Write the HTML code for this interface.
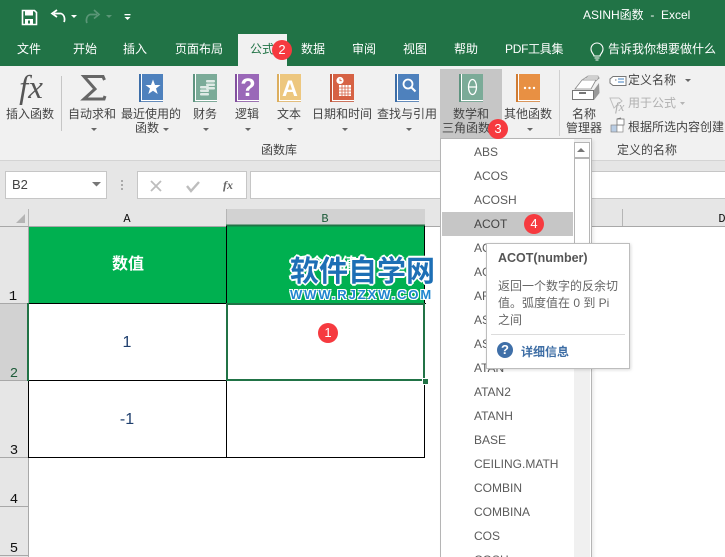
<!DOCTYPE html>
<html><head><meta charset="utf-8">
<style>
html,body{margin:0;padding:0;width:725px;height:557px;overflow:hidden;background:#fff}
#r{position:absolute;left:0;top:0;width:725px;height:557px;overflow:hidden;background:#fff;font-family:"Liberation Sans","Noto Sans CJK SC",sans-serif;font-size:12px;color:#444}
.a{position:absolute}
.t{position:absolute;white-space:nowrap;line-height:16px;height:16px}
.c{position:absolute;white-space:nowrap;line-height:16px;height:16px;transform:translateX(-50%);text-align:center}
.w{color:#fff}
.m{font-family:"Liberation Mono",monospace;color:#111}
.n{font-size:14px}
.fn{position:absolute;left:474px;line-height:16px;color:#5a5a5a;white-space:nowrap}
.b{position:absolute;width:20px;height:20px;border-radius:50%;background:#f63a3f;color:#fff;text-align:center;line-height:20px;font-size:13px}
svg{position:absolute;left:0;top:0}
</style></head><body><div id="r">
<div class="a" style="left:0;top:0;width:725px;height:66px;background:#217346"></div>
<div class="a" style="left:238px;top:34px;width:49px;height:32px;background:#f1f1f1"></div>
<div class="a" style="left:0;top:66px;width:725px;height:94px;background:#f1f1f1"></div>
<div class="a" style="left:0;top:160px;width:725px;height:49px;background:#e6e6e6;border-top:1px solid #d4d4d4;box-sizing:border-box"></div>
<div class="a" style="left:440px;top:69px;width:62px;height:69px;background:#c6c6c6"></div>
<div class="a" style="left:61px;top:76px;width:1px;height:55px;background:#c6c6c6"></div>
<div class="a" style="left:559px;top:70px;width:1px;height:66px;background:#d0d0d0"></div>

<div class="a" style="left:5px;top:171px;width:100px;height:26px;background:#fff;border:1px solid #c6c6c6"></div>
<div class="a" style="left:137px;top:171px;width:108px;height:26px;background:#fff;border:1px solid #c6c6c6"></div>
<div class="a" style="left:250px;top:171px;width:480px;height:26px;background:#fff;border:1px solid #c6c6c6"></div>

<div class="a" style="left:0;top:209px;width:725px;height:17px;background:#e6e6e6"></div>
<div class="a" style="left:226px;top:209px;width:199px;height:17px;background:#d2d2d2"></div>
<div class="a" style="left:0;top:226px;width:28px;height:331px;background:#e6e6e6"></div>
<div class="a" style="left:0;top:303px;width:28px;height:78px;background:#d2d2d2"></div>
<div class="a" style="left:29px;top:226px;width:396px;height:77px;background:#00b050"></div>

<svg width="725" height="557" viewBox="0 0 725 557">
<!-- QAT -->
<path d="M22.500 10.500h12l2 2v12h-14z" fill="none" stroke="#fff" stroke-width="1.600"/>
<rect x="25" y="11" width="8" height="4.500" fill="#fff"/><rect x="25" y="19" width="8" height="5" fill="#fff"/><rect x="28" y="20.500" width="2" height="3" fill="#217346"/>
<path d="M64 22c1-2 1-7-3-8.500h-7" fill="none" stroke="#fff" stroke-width="1.700"/><path d="M57 10l-5 3.500 5 3.500" fill="none" stroke="#fff" stroke-width="1.700"/>
<path d="M71 15h6l-3 3z" fill="#fff"/>
<path d="M87 23c-1-2-1-7 3-8.500h7" fill="none" stroke="#5b9677" stroke-width="1.700"/><path d="M94 10l5 4.500-5 4" fill="none" stroke="#5b9677" stroke-width="1.700"/>
<path d="M106 15h6l-3 3z" fill="#5b9677"/>
<rect x="124.500" y="14" width="6" height="1.300" fill="#fff"/><path d="M124.500 17h6l-3 3z" fill="#fff"/>
<!-- bulb -->
<path d="M594 56c0-2-3-3-3-7a6 6 0 0 1 12 0c0 4-3 5-3 7z" fill="none" stroke="#fff" stroke-width="1.100"/><path d="M594.500 58h5M595.500 60h3" stroke="#fff" stroke-width="1.100"/>
<!-- sigma -->
<path d="M104.500 80l-1.500-3.500H84l11 12.500-11 10h20l1-3" fill="none" stroke="#666" stroke-width="3"/>
<!-- books -->
<g>
<path d="M139 74h24v28h-24z" fill="#4e81bd"/><path d="M139 74h2v27h22v1h-24z" fill="#3d6ea8"/><rect x="141" y="74" width="1" height="26.500" fill="#fff"/><rect x="141" y="100" width="22" height="1.200" fill="#fff"/>
<path d="M153 79.500l2 5.500h5.500l-4.500 3.500 1.700 5.500-4.700-3.300-4.700 3.300 1.700-5.500-4.500-3.500h5.500z" fill="#fff"/>
</g>
<g>
<path d="M193 74h24v28h-24z" fill="#7bab98"/><path d="M193 74h2v27h22v1h-24z" fill="#5f9480"/><rect x="195" y="74" width="1" height="26.500" fill="#fff"/><rect x="195" y="100" width="22" height="1.200" fill="#fff"/>
<g fill="#dfeae5"><rect x="206" y="80" width="9" height="2.500" rx="1"/><rect x="206" y="83.500" width="9" height="2.500" rx="1"/><rect x="206" y="87" width="9" height="2.500" rx="1"/><rect x="200" y="86" width="9" height="2.500" rx="1"/><rect x="200" y="89.500" width="9" height="2.500" rx="1"/><rect x="200" y="93" width="9" height="2.500" rx="1"/></g>
</g>
<g>
<path d="M235 74h24v28h-24z" fill="#9a68b8"/><path d="M235 74h2v27h22v1h-24z" fill="#83509f"/><rect x="237" y="74" width="1" height="26.500" fill="#fff"/><rect x="237" y="100" width="22" height="1.200" fill="#fff"/>
</g>
<g>
<path d="M277 74h24v28h-24z" fill="#edc77f"/><path d="M277 74h2v27h22v1h-24z" fill="#dcae5e"/><rect x="279" y="74" width="1" height="26.500" fill="#fff"/><rect x="279" y="100" width="22" height="1.200" fill="#fff"/>
</g>
<g>
<path d="M330 74h24v28h-24z" fill="#d66244"/><path d="M330 74h2v27h22v1h-24z" fill="#bf5236"/><rect x="332" y="74" width="1" height="26.500" fill="#fff"/><rect x="332" y="100" width="22" height="1.200" fill="#fff"/>
<circle cx="340" cy="80.500" r="3.600" fill="#fff"/><path d="M340 78.500v2.200h1.800" stroke="#d66244" stroke-width=".8" fill="none"/>
<path d="M339 85h12v11h-12z" fill="#fff"/><path d="M339 88h12M339 91h12M339 94h12M342 85v11M345 85v11M348 85v11" stroke="#d66244" stroke-width=".8"/>
</g>
<g>
<path d="M395 74h24v28h-24z" fill="#4e81bd"/><path d="M395 74h2v27h22v1h-24z" fill="#3d6ea8"/><rect x="397" y="74" width="1" height="26.500" fill="#fff"/><rect x="397" y="100" width="22" height="1.200" fill="#fff"/>
<circle cx="408" cy="84" r="4.500" fill="none" stroke="#fff" stroke-width="1.800"/><path d="M411.500 87.500l4 4" stroke="#fff" stroke-width="2"/>
</g>
<g>
<path d="M459 74h24v28h-24z" fill="#7bab98"/><path d="M459 74h2v27h22v1h-24z" fill="#5f9480"/><rect x="461" y="74" width="1" height="26.500" fill="#fff"/><rect x="461" y="100" width="22" height="1.200" fill="#fff"/>
<ellipse cx="472.500" cy="87" rx="4" ry="7.500" fill="none" stroke="#fff" stroke-width="1.300"/><path d="M468.500 87h8" stroke="#fff" stroke-width="1.300"/>
</g>
<g>
<path d="M516 74h24v28h-24z" fill="#e89043"/><path d="M516 74h2v27h22v1h-24z" fill="#d07c33"/><rect x="518" y="74" width="1" height="26.500" fill="#fff"/><rect x="518" y="100" width="22" height="1.200" fill="#fff"/>
<circle cx="525" cy="88" r="1.200" fill="#fff"/><circle cx="529.500" cy="88" r="1.200" fill="#fff"/><circle cx="534" cy="88" r="1.200" fill="#fff"/>
</g>
<!-- ribbon chevrons -->
<g fill="#666">
<path d="M91 128h6l-3 3z"/><path d="M163 128h6l-3 3z"/><path d="M203 128h6l-3 3z"/><path d="M245 128h6l-3 3z"/><path d="M287 128h6l-3 3z"/><path d="M342 128h6l-3 3z"/><path d="M406 128h6l-3 3z"/><path d="M527 128h6l-3 3z"/><path d="M685 79h6l-3 3z"/>
<path d="M680 102h5l-2.500 3z" fill="#b5b5b5"/>
</g>
<!-- name manager -->
<path d="M575 89l7-9h14l-5 9z" fill="#fff" stroke="#888" stroke-width=".8"/><path d="M582 80l3-2h14l-3 3M585 78l3-2h10l1 3" fill="none" stroke="#999" stroke-width=".8"/>
<path d="M572.500 90.500h21v9h-21z" fill="#fff" stroke="#777"/><path d="M594 90l5-7 .5 10-5.500 7z" fill="#999"/><rect x="579" y="92" width="7" height="2" fill="#777"/>
<!-- define name -->
<path d="M613 76.500h13v9h-13l-3-2.500v-4z" fill="#fff" stroke="#777"/><path d="M615 80h1.500" stroke="#777"/><path d="M618 79h6M618 82h6" stroke="#3f7fbf"/>
<!-- use in formula -->
<path d="M610 98h9l3 3-8 7z" fill="none" stroke="#c0c0c0"/><text x="615" y="111" font-family="Liberation Serif,serif" font-style="italic" font-size="13" fill="#b0b0b0">fx</text>
<!-- create from sel -->
<rect x="611" y="125" width="6" height="7" fill="#b9cde4" stroke="#888" stroke-width=".7"/><rect x="617" y="125" width="6" height="7" fill="#fff" stroke="#888" stroke-width=".7"/><rect x="617" y="119" width="7" height="6" fill="#fff" stroke="#777" stroke-width=".8"/><path d="M617 119l4-1" stroke="#777"/>
<!-- formula bar -->
<path d="M92 182h9l-4.500 4.500z" fill="#777"/>
<g fill="#aaa"><rect x="121" y="180" width="2" height="2"/><rect x="121" y="184" width="2" height="2"/><rect x="121" y="188" width="2" height="2"/></g>
<path d="M151 181l10 10M161 181l-10 10" stroke="#bdbdbd" stroke-width="1.800"/>
<path d="M187 186l4 5 8-9" fill="none" stroke="#bdbdbd" stroke-width="2.400"/>
<!-- corner tri -->
<path d="M25 223v-9l-9 9z" fill="#b4b4b4"/>
<!-- headers dividers -->
<path d="M28.500 209v17M226.500 209v17M622.500 209v17" stroke="#b5b5b5"/>
<path d="M0 226.500h226M425 226.500h300" stroke="#a8a8a8"/>
<path d="M226 225.500h199" stroke="#217346" stroke-width="2"/>
<path d="M0 303.500h28M0 380.500h28M0 457.500h28M0 506.500h28M0 555.500h28" stroke="#a8a8a8"/>
<path d="M28.500 226v331" stroke="#a8a8a8"/>
<!-- grid -->
<path d="M29 303.500h397M29 380.500h396M29 457.500h396M28.500 303v155M226.500 226v232M424.500 226v232" stroke="#000" stroke-width="1" fill="none"/>
<path d="M28 303v78" stroke="#217346" stroke-width="2"/>
</svg>

<div class="c" style="left:248px;top:76px;font-size:25px;font-weight:bold;color:#fff;line-height:24px;height:24px">?</div>
<div class="c" style="left:290px;top:77px;font-size:22px;font-weight:bold;color:#fff;line-height:24px;height:24px">A</div>
<div class="c" style="left:31px;top:71px;font:italic 33px/34px 'Liberation Serif',serif;color:#555;height:34px">fx</div>

<!-- title bar -->
<div class="t w" style="left:583px;top:7px;white-space:pre">ASINH函数  -  Excel</div>
<div class="c w" style="left:29px;top:41px">文件</div>
<div class="c w" style="left:85px;top:41px">开始</div>
<div class="c w" style="left:135px;top:41px">插入</div>
<div class="c w" style="left:199px;top:41px">页面布局</div>
<div class="t" style="left:250px;top:41px;color:#217346">公式</div>
<div class="c w" style="left:313px;top:41px">数据</div>
<div class="c w" style="left:364px;top:41px">审阅</div>
<div class="c w" style="left:415px;top:41px">视图</div>
<div class="c w" style="left:466px;top:41px">帮助</div>
<div class="t w" style="left:505px;top:41px;letter-spacing:-.3px">PDF工具集</div>
<div class="t w" style="left:608px;top:41px">告诉我你想要做什么</div>

<!-- ribbon labels -->
<div class="c" style="left:30px;top:106px">插入函数</div>
<div class="c" style="left:92px;top:106px">自动求和</div>
<div class="c" style="left:151px;top:106px">最近使用的</div>
<div class="c" style="left:147px;top:120px">函数</div>
<div class="c" style="left:205px;top:106px">财务</div>
<div class="c" style="left:247px;top:106px">逻辑</div>
<div class="c" style="left:289px;top:106px">文本</div>
<div class="c" style="left:342px;top:106px">日期和时间</div>
<div class="c" style="left:407px;top:106px">查找与引用</div>
<div class="c" style="left:471px;top:106px">数学和</div>
<div class="c" style="left:466px;top:120px">三角函数</div>
<div class="c" style="left:528px;top:106px">其他函数</div>
<div class="c" style="left:584px;top:106px">名称</div>
<div class="c" style="left:584px;top:120px">管理器</div>
<div class="t" style="left:628px;top:72px">定义名称</div>
<div class="t" style="left:628px;top:95px;color:#b0b0b0">用于公式</div>
<div class="t" style="left:628px;top:119px">根据所选内容创建</div>
<div class="c" style="left:279px;top:142px">函数库</div>
<div class="c" style="left:647px;top:142px">定义的名称</div>

<div class="t" style="left:12px;top:177px;color:#444;font-size:13px">B2</div>
<div class="c" style="left:228px;top:177px;font:italic bold 12px/16px 'Liberation Serif',serif;color:#666">fx</div>

<!-- headers -->
<div class="c m" style="left:127px;top:211px">A</div>
<div class="c m" style="left:325px;top:211px;color:#1e5c3a">B</div>
<div class="c m" style="left:722px;top:211px">D</div>
<div class="c m n" style="left:13px;top:289px">1</div>
<div class="c m n" style="left:14px;top:366px;color:#1e5c3a">2</div>
<div class="c m n" style="left:14px;top:443px">3</div>
<div class="c m n" style="left:14px;top:492px">4</div>
<div class="c m n" style="left:14px;top:541px">5</div>

<!-- cells -->
<div class="c w" style="left:128px;top:256px;font-size:16px;line-height:18px;height:18px;font-weight:bold">数值</div>
<div class="c w" style="left:325px;top:256px;font-size:16px;line-height:18px;height:18px;font-weight:bold">反余切值</div>
<div class="c" style="left:127px;top:335px;font-size:16px;color:#1f3f6e">1</div>
<div class="c" style="left:127px;top:412px;font-size:16px;color:#1f3f6e">-1</div>

<!-- selection -->
<div class="a" style="left:226px;top:303px;width:195px;height:74px;border:2px solid #217346"></div>
<div class="a" style="left:422px;top:378px;width:5px;height:5px;background:#217346;border:1px solid #fff;box-sizing:content-box"></div>

<!-- watermark -->
<div class="t" style="left:290px;top:255px;width:150px;font-size:29px;line-height:34px;height:34px;font-weight:bold;color:#1d6fb5;text-shadow:-1px -1px 0 #fff,1px -1px 0 #fff,-1px 1px 0 #fff,1px 1px 0 #fff,0 -2px 0 #fff,0 2px 0 #fff,2px 0 0 #fff,-2px 0 0 #fff">软件自学网</div>
<div class="t" style="left:290px;top:287px;font-size:13px;font-weight:bold;color:#1f86cf;letter-spacing:1.900px;text-shadow:-1px -1px 0 #fff,1px -1px 0 #fff,-1px 1px 0 #fff,1px 1px 0 #fff">WWW.RJZXW.COM</div>

<!-- dropdown -->
<div class="a" style="left:440px;top:138px;width:150px;height:425px;background:#fff;border:1px solid #b5b5b5;box-shadow:2px 2px 3px rgba(0,0,0,.08)"></div>
<div class="a" style="left:574px;top:139px;width:16px;height:418px;background:#f0f0f0"></div>
<div class="a" style="left:574px;top:142px;width:14px;height:14px;background:#fff;border:1px solid #b5b5b5"></div>
<div class="a" style="left:574px;top:158px;width:14px;height:90px;background:#fff;border:1px solid #b5b5b5"></div>
<svg width="725" height="557" style="pointer-events:none"><path d="M577 152l4-4 4 4z" fill="#777"/></svg>
<div class="a" style="left:442px;top:212px;width:131px;height:24px;background:#c6c6c6"></div>
<div class="fn" style="top:144px">ABS</div>
<div class="fn" style="top:168px">ACOS</div>
<div class="fn" style="top:192px">ACOSH</div>
<div class="fn" style="top:216px;color:#444">ACOT</div>
<div class="fn" style="top:240px">ACOTH</div>
<div class="fn" style="top:264px">AGGREGATE</div>
<div class="fn" style="top:288px">ARABIC</div>
<div class="fn" style="top:312px">ASIN</div>
<div class="fn" style="top:336px">ASINH</div>
<div class="fn" style="top:360px">ATAN</div>
<div class="fn" style="top:384px">ATAN2</div>
<div class="fn" style="top:408px">ATANH</div>
<div class="fn" style="top:432px">BASE</div>
<div class="fn" style="top:456px">CEILING.MATH</div>
<div class="fn" style="top:480px">COMBIN</div>
<div class="fn" style="top:504px">COMBINA</div>
<div class="fn" style="top:528px">COS</div>
<div class="fn" style="top:552px">COSH</div>

<!-- tooltip -->
<div class="a" style="left:486px;top:243px;width:142px;height:124px;background:#fff;border:1px solid #bdbdbd;box-shadow:1px 1px 3px rgba(0,0,0,.15)"></div>
<div class="t" style="left:498px;top:250px;font-weight:bold;font-size:12.500px;color:#555">ACOT(number)</div>
<div class="t" style="left:498px;top:278px;color:#666">返回一个数字的反余切</div>
<div class="t" style="left:498px;top:295px;color:#666;white-space:pre">值。弧度值在 0 到 Pi</div>
<div class="t" style="left:498px;top:312px;color:#666">之间</div>
<div class="a" style="left:491px;top:334px;width:134px;height:1px;background:#dcdcdc"></div>
<div class="a" style="left:497px;top:342px;width:16px;height:16px;border-radius:50%;background:#3f6fa8;color:#fff;font-weight:bold;font-size:13px;line-height:16px;text-align:center">?</div>
<div class="t" style="left:521px;top:344px;color:#3e6ea5;font-weight:bold">详细信息</div>

<!-- badges -->
<div class="b" style="left:272px;top:40px">2</div>
<div class="b" style="left:488px;top:119px">3</div>
<div class="b" style="left:524px;top:214px">4</div>
<div class="b" style="left:318px;top:323px">1</div>
</div></body></html>
